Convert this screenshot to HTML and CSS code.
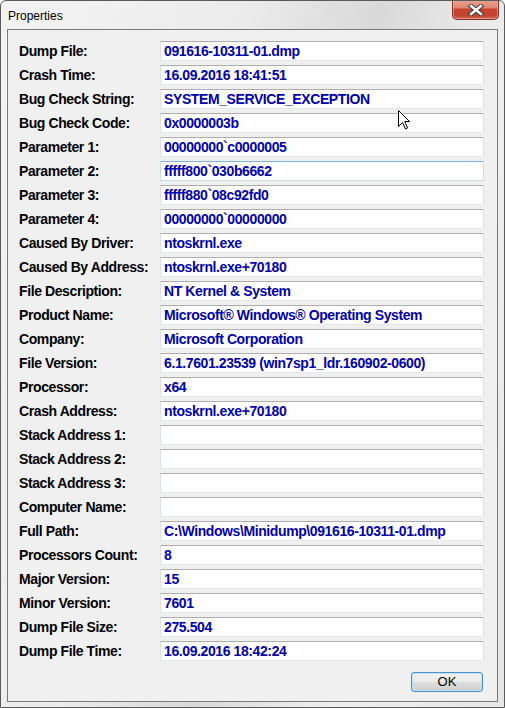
FILE: index.html
```html
<!DOCTYPE html>
<html lang="en">
<head>
<meta charset="utf-8">
<title>Properties</title>
<link rel="stylesheet" href="styles.css">
</head>
<body>
<div class="window">
  <div class="titlebar">
    <span class="title">Properties</span>
    <div class="close" aria-label="Close">
      <svg width="16" height="12" viewBox="0 0 16 12">
        <path d="M3 2 L13 10 M13 2 L3 10" stroke="#3a3a3a" stroke-width="4.4" stroke-linecap="square" fill="none"/>
        <path d="M3 2 L13 10 M13 2 L3 10" stroke="#ffffff" stroke-width="2.4" stroke-linecap="square" fill="none"/>
      </svg>
    </div>
  </div>
  <div class="client">
    <div class="fields">
      <div class="label">Dump File:</div><div class="field">091616-10311-01.dmp</div>
      <div class="label">Crash Time:</div><div class="field">16.09.2016 18:41:51</div>
      <div class="label">Bug Check String:</div><div class="field">SYSTEM_SERVICE_EXCEPTION</div>
      <div class="label">Bug Check Code:</div><div class="field">0x0000003b</div>
      <div class="label">Parameter 1:</div><div class="field">00000000`c0000005</div>
      <div class="label">Parameter 2:</div><div class="field hover">fffff800`030b6662</div>
      <div class="label">Parameter 3:</div><div class="field">fffff880`08c92fd0</div>
      <div class="label">Parameter 4:</div><div class="field">00000000`00000000</div>
      <div class="label">Caused By Driver:</div><div class="field">ntoskrnl.exe</div>
      <div class="label">Caused By Address:</div><div class="field">ntoskrnl.exe+70180</div>
      <div class="label">File Description:</div><div class="field">NT Kernel &amp; System</div>
      <div class="label">Product Name:</div><div class="field">Microsoft® Windows® Operating System</div>
      <div class="label">Company:</div><div class="field">Microsoft Corporation</div>
      <div class="label">File Version:</div><div class="field">6.1.7601.23539 (win7sp1_ldr.160902-0600)</div>
      <div class="label">Processor:</div><div class="field">x64</div>
      <div class="label">Crash Address:</div><div class="field">ntoskrnl.exe+70180</div>
      <div class="label">Stack Address 1:</div><div class="field"></div>
      <div class="label">Stack Address 2:</div><div class="field"></div>
      <div class="label">Stack Address 3:</div><div class="field"></div>
      <div class="label">Computer Name:</div><div class="field"></div>
      <div class="label">Full Path:</div><div class="field">C:\Windows\Minidump\091616-10311-01.dmp</div>
      <div class="label">Processors Count:</div><div class="field">8</div>
      <div class="label">Major Version:</div><div class="field">15</div>
      <div class="label">Minor Version:</div><div class="field">7601</div>
      <div class="label">Dump File Size:</div><div class="field">275.504</div>
      <div class="label">Dump File Time:</div><div class="field">16.09.2016 18:42:24</div>
    </div>
    <div class="actions">
      <div class="ok">OK</div>
    </div>
  </div>
  <svg class="cursor" width="13" height="20" viewBox="0 0 13 20">
    <path d="M0.5 0.5 L0.5 16.5 L4.5 12.5 L7.5 19 L9.5 18 L6.8 11.5 L11.5 11.5 Z" fill="#ffffff" stroke="#000000" stroke-width="1" stroke-linejoin="miter"/>
  </svg>
</div>
</body>
</html>
```

FILE: styles.css
```css
html, body {
  margin: 0;
  padding: 0;
  background: #ffffff;
}

.window {
  position: relative;
  width: 505px;
  height: 708px;
  box-sizing: border-box;
  border: 1px solid #5a5a5a;
  border-radius: 6px 6px 0 0;
  background: linear-gradient(105deg, #f3f3f3 0%, #ececec 35%, #d9d9d9 55%, #efefef 75%, #e6e6e6 100%);
  display: flex;
  flex-direction: column;
  font-family: "Liberation Sans", Arial, sans-serif;
  overflow: hidden;
}

.titlebar {
  height: 28px;
  display: flex;
  align-items: flex-start;
  flex-shrink: 0;
}

.title {
  padding: 8px 0 0 7px;
  font-size: 12px;
  line-height: 15px;
  color: #000000;
}

.close {
  margin-left: auto;
  margin-right: 5px;
  margin-top: -1px;
  width: 47px;
  height: 20px;
  box-sizing: border-box;
  border: 1px solid #7e3228;
  border-top: none;
  border-radius: 0 0 5px 5px;
  background: linear-gradient(180deg, #eaa493 0%, #dd8571 40%, #c8432c 50%, #c0432f 80%, #d26650 100%);
  box-shadow: inset 0 0 0 1px rgba(255, 210, 200, 0.45);
  display: flex;
  align-items: center;
  justify-content: center;
}

.close svg {
  display: block;
}

.client {
  margin: 0 6px;
  height: 673px;
  box-sizing: border-box;
  border: 1px solid #7a7a7a;
  background: #f0f0f0;
  padding: 11px 13px 0 11px;
  flex-shrink: 0;
}

.fields {
  display: grid;
  grid-template-columns: 141px 324px;
  grid-auto-rows: 20px;
  row-gap: 4px;
}

.label {
  font-size: 14px;
  font-weight: bold;
  letter-spacing: -0.4px;
  line-height: 20px;
  color: #000000;
  white-space: nowrap;
}

.field {
  box-sizing: border-box;
  height: 20px;
  background: #ffffff;
  border: 1px solid #dbdfe6;
  border-top-color: #acaeb4;
  border-bottom-color: #e5e9ee;
  padding-left: 3px;
  font-size: 14px;
  font-weight: bold;
  letter-spacing: -0.4px;
  line-height: 18px;
  color: #0000aa;
  white-space: nowrap;
  overflow: hidden;
}

.field.hover {
  border-color: #c5dbee;
  border-top-color: #7eb4ea;
}

.actions {
  display: flex;
  justify-content: flex-end;
  margin-top: 11px;
  padding-right: 1px;
}

.ok {
  width: 72px;
  height: 20px;
  box-sizing: border-box;
  border: 1px solid #4b91c9;
  border-radius: 3px;
  background: linear-gradient(180deg, #f2f2f2 0%, #ebebeb 48%, #dddddd 52%, #cfcfcf 100%);
  box-shadow: inset 0 0 0 1px #bfe2f8;
  font-size: 13px;
  line-height: 18px;
  text-align: center;
  color: #000000;
}

.cursor {
  position: absolute;
  left: 397px;
  top: 109px;
  display: block;
}
```
